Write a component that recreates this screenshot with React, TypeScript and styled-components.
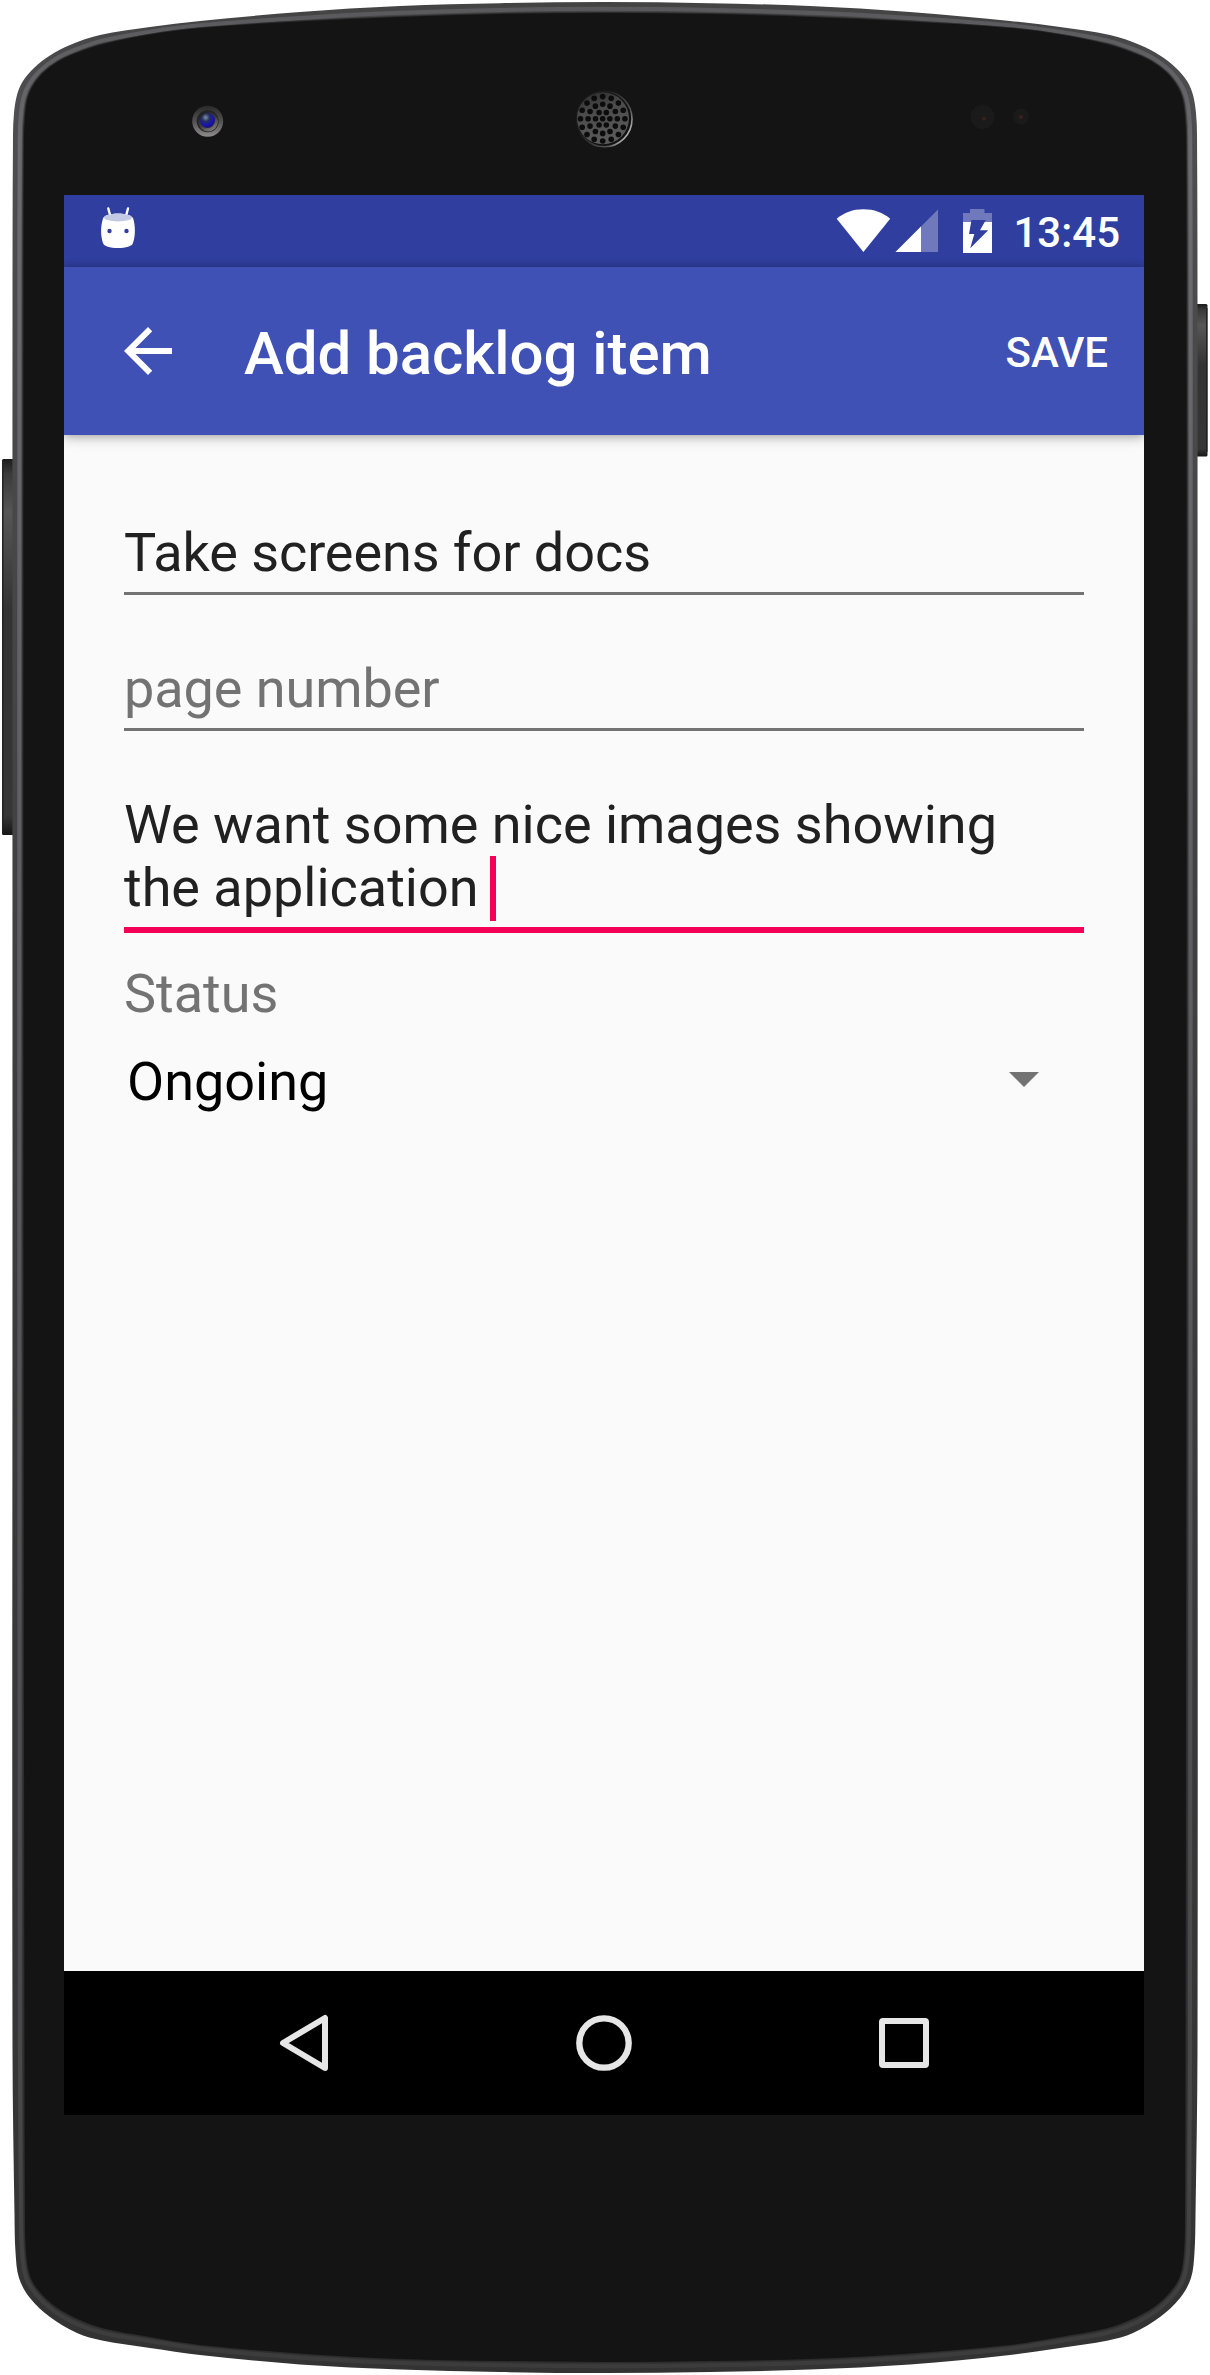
import React from "react";
import styled, { createGlobalStyle } from "styled-components";

const GlobalStyle = createGlobalStyle`
  *, *::before, *::after { box-sizing: border-box; }
  body { margin: 0; background: #fff; font-family: Roboto, "Noto Sans", sans-serif; }
`;

const Device = styled.div`
  position: relative;
  width: 1210px;
  height: 2375px;
  padding: 195px 66px 260px 64px;
`;

const Shell = styled.svg`
  position: absolute;
  inset: 0;
  display: block;
`;

const Screen = styled.main`
  position: relative;
  display: flex;
  flex-direction: column;
  width: 1080px;
  height: 1920px;
  background: #fafafa;
  overflow: hidden;
`;

const StatusBar = styled.div`
  flex: none;
  display: flex;
  align-items: center;
  justify-content: space-between;
  height: 72px;
  padding: 0 24px 0 36px;
  background: #303f9f;
`;

const StatusGroup = styled.div`
  display: flex;
  align-items: center;
`;

const Clock = styled.span`
  margin-left: 20px;
  padding-top: 3px;
  font-size: 42px;
  line-height: 49px;
  font-weight: 500;
  color: #fff;
`;

const Toolbar = styled.header`
  position: relative;
  z-index: 1;
  flex: none;
  display: flex;
  align-items: center;
  height: 168px;
  padding: 0 36px 0 48px;
  background: #3f51b5;
  color: #fff;
  box-shadow: 0 0 8px rgba(0, 0, 0, 0.27), 0 4px 12px rgba(0, 0, 0, 0.17);
`;

const IconButton = styled.button`
  display: flex;
  padding: 0;
  border: 0;
  background: none;
  color: inherit;
`;

const Title = styled.h1`
  flex: 1;
  margin: 5px 0 0 60px;
  font-size: 60px;
  line-height: 71px;
  font-weight: 500;
  letter-spacing: -0.08px;
`;

const SaveButton = styled.button`
  padding: 3px 0 0;
  border: 0;
  background: none;
  color: inherit;
  font: 500 42px/49px Roboto, "Noto Sans", sans-serif;
`;

const Form = styled.section`
  flex: 1;
  display: flex;
  flex-direction: column;
  gap: 62px;
  padding: 86px 60px 0;
`;

const Field = styled.div<{ $focused?: boolean; $hint?: boolean }>`
  padding-bottom: 8px;
  border-bottom: ${(p) => (p.$focused ? "6px solid #f50057" : "3px solid #737373")};
  color: ${(p) => (p.$hint ? "#737373" : "#212121")};
  font-size: 54px;
  line-height: 63px;
  letter-spacing: ${(p) => (p.$focused ? "-0.02px" : "-0.07px")};
  white-space: pre-wrap;
`;

const CaretAnchor = styled.span`
  position: relative;
`;

const Caret = styled.span`
  position: absolute;
  left: -2px;
  top: 0;
  width: 6px;
  height: 65px;
  background: #f50057;
`;

const StatusField = styled.div`
  display: flex;
  flex-direction: column;
  gap: 25px;
  margin-top: -33px;
  font-size: 54px;
  line-height: 63px;
`;

const Label = styled.span`
  color: #737373;
`;

const Spinner = styled.div`
  display: flex;
  align-items: center;
  justify-content: space-between;
  padding: 0 45px 0 3px;
  color: #000;
`;

const DropdownArrow = styled.svg`
  margin-bottom: 4px;
`;

const NavBar = styled.nav`
  flex: none;
  display: flex;
  align-items: center;
  justify-content: space-between;
  height: 144px;
  padding: 0 204px;
  background: #000;
`;

/* Left half of the body outline, from top centre to bottom centre: [outerX, outerY, innerX, innerY] */
const EDGE: number[][] = [
  [605, 2, 605, 13],
  [500, 3.2, 500, 14],
  [400, 6, 400, 17],
  [300, 12, 300, 21.5],
  [200, 21, 200, 28],
  [150, 27, 150, 34.5],
  [100, 35, 104, 44],
  [70, 45, 78, 52.5],
  [50, 55.5, 59, 61],
  [34, 68, 43, 73],
  [23, 81, 33, 86],
  [17, 95, 27.5, 99],
  [14, 113, 25, 117],
  [13, 135, 24, 138],
  [12.5, 300, 23.5, 300],
  [12.5, 1200, 23.5, 1200],
  [12.5, 2050, 24.5, 2050],
  [14.5, 2215, 25, 2215],
  [15.5, 2252, 26, 2252],
  [19, 2278, 30, 2276],
  [30, 2298, 39, 2291],
  [50, 2317, 56, 2307],
  [77, 2333, 80, 2320],
  [102, 2340.5, 104, 2328.5],
  [150, 2348, 150, 2337],
  [200, 2355, 200, 2345],
  [300, 2364.5, 300, 2353.5],
  [400, 2369.5, 400, 2359],
  [500, 2372, 500, 2361],
  [605, 2373, 605, 2362],
];

function outline(t: number): string {
  const left = EDGE.map(([ox, oy, ix, iy]) => [ox + (ix - ox) * t, oy + (iy - oy) * t]);
  const right = left.slice(1, -1).reverse().map(([x, y]) => [1210 - x, y]);
  const pts = [...left, ...right];
  const n = pts.length;
  let d = `M${pts[0][0]} ${pts[0][1]}`;
  for (let i = 0; i < n; i++) {
    const a = pts[(i - 1 + n) % n];
    const b = pts[i];
    const c = pts[(i + 1) % n];
    const e = pts[(i + 2) % n];
    const len = Math.hypot(c[0] - b[0], c[1] - b[1]);
    const h1 = len / 3 / (Math.hypot(c[0] - a[0], c[1] - a[1]) || 1);
    const h2 = len / 3 / (Math.hypot(e[0] - b[0], e[1] - b[1]) || 1);
    d += `C${b[0] + (c[0] - a[0]) * h1} ${b[1] + (c[1] - a[1]) * h1} ${c[0] - (e[0] - b[0]) * h2} ${
      c[1] - (e[1] - b[1]) * h2
    } ${c[0]} ${c[1]}`;
  }
  return d + "Z";
}

/* Speaker perforations: a centre hole and rings of 6, 12 and 16 */
const HOLES: number[][] = [[0, 0]];
[[7.2, 6, 60], [14.6, 12, 0], [22.2, 16, 0]].forEach(([r, count, offset]) => {
  for (let i = 0; i < count; i++) {
    const angle = ((i * 360) / count + offset) * (Math.PI / 180);
    HOLES.push([r * Math.cos(angle), r * Math.sin(angle)]);
  }
});

function PhoneShell() {
  return (
    <Shell width="1210" height="2375" viewBox="0 0 1210 2375" aria-hidden="true">
      <defs>
        <linearGradient id="rim" x1="0" y1="0" x2="0" y2="1">
          <stop offset="0" stopColor="#434344" />
          <stop offset="0.04" stopColor="#4e4e50" />
          <stop offset="0.5" stopColor="#3c3c3e" />
          <stop offset="1" stopColor="#333334" />
        </linearGradient>
        <linearGradient id="shine" x1="0" y1="0" x2="0" y2="1">
          <stop offset="0" stopColor="#5a5a5c" />
          <stop offset="0.06" stopColor="#6c6c70" />
          <stop offset="0.5" stopColor="#5a5a5e" />
          <stop offset="0.9" stopColor="#474748" />
          <stop offset="1" stopColor="#3c3c3d" />
        </linearGradient>
        <linearGradient id="key" x1="0" y1="0" x2="0" y2="1">
          <stop offset="0" stopColor="#1c1c1c" />
          <stop offset="0.04" stopColor="#3a3a3a" />
          <stop offset="0.14" stopColor="#565656" />
          <stop offset="0.4" stopColor="#333" />
          <stop offset="0.95" stopColor="#363636" />
          <stop offset="1" stopColor="#161616" />
        </linearGradient>
        <linearGradient id="lensRing" x1="0" y1="0" x2="0" y2="1">
          <stop offset="0" stopColor="#2a2a2a" />
          <stop offset="0.5" stopColor="#515151" />
          <stop offset="1" stopColor="#8c8c8c" />
        </linearGradient>
        <linearGradient id="lensInner" x1="0.2" y1="0" x2="0.8" y2="1">
          <stop offset="0" stopColor="#1d1d1d" />
          <stop offset="0.5" stopColor="#3c3a3a" />
          <stop offset="1" stopColor="#8a8580" />
        </linearGradient>
        <radialGradient id="lens" cx="0.38" cy="0.3" r="0.75">
          <stop offset="0" stopColor="#7d93a4" />
          <stop offset="0.35" stopColor="#26305c" />
          <stop offset="0.7" stopColor="#1812b8" />
          <stop offset="1" stopColor="#1a1450" />
        </radialGradient>
        <linearGradient id="grilleRim" x1="0" y1="0.1" x2="1" y2="0.75">
          <stop offset="0.35" stopColor="#1c1c1c" />
          <stop offset="0.8" stopColor="#555" />
          <stop offset="1" stopColor="#c8c8c8" />
        </linearGradient>
        <linearGradient id="grille" x1="0" y1="0" x2="0.3" y2="1">
          <stop offset="0" stopColor="#282828" />
          <stop offset="0.4" stopColor="#4a4a4a" />
          <stop offset="1" stopColor="#5a5a5a" />
        </linearGradient>
      </defs>

      <rect x="2" y="459" width="14" height="376" rx="1.5" fill="url(#key)" />
      <rect x="1194" y="304" width="13.5" height="152.500" rx="1.5" fill="url(#key)" />
      <rect x="2" y="465" width="1.500" height="364" fill="#222" />
      <rect x="1206" y="308" width="1.500" height="144" fill="#222" />

      <path d={outline(0)} fill="url(#rim)" />
      <path d={outline(0.62)} fill="none" stroke="url(#shine)" strokeWidth="4" />
      <path d={outline(0.9)} fill="#2c2c2d" />
      <path d={outline(1)} fill="#141414" />

      <circle cx="207.700" cy="121.300" r="15.500" fill="url(#lensRing)" />
      <circle cx="207.700" cy="121.300" r="11" fill="#232323" />
      <circle cx="208" cy="121.500" r="10" fill="url(#lensInner)" />
      <circle cx="207.500" cy="120.500" r="7.400" fill="url(#lens)" />

      <circle cx="604.300" cy="119" r="27.700" fill="#111" stroke="url(#grilleRim)" strokeWidth="1.600" />
      <circle cx="603" cy="118.300" r="26" fill="url(#grille)" />
      {HOLES.map(([x, y], i) => (
        <circle key={i} cx={602.7 + x} cy={118.8 + y} r="2.800" fill="#0c0c0c" />
      ))}

      <circle cx="982.500" cy="117" r="12" fill="#1b1a1a" />
      <circle cx="984" cy="118.500" r="2" fill="#38221b" />
      <circle cx="1021" cy="116.500" r="8" fill="#1b1a1a" />
      <circle cx="1021" cy="117" r="2" fill="#38221b" />
    </Shell>
  );
}

function RobotIcon() {
  return (
    <svg width="36" height="48" viewBox="100 207 36 48">
      <path d="M108.300 208.500 L110.300 216 M128 208.500 L126 216" stroke="#fff" strokeWidth="2.400" strokeLinecap="round" />
      <path
        d="M103 218.500C103.500 216 110 213.500 118 213.500S132.500 216 133.200 218.500C135.500 226 135.500 236 133 243C132 246.500 126 248 118 248S104 246.500 103 243C100.500 236 100.500 226 103 218.500Z"
        fill="#fff"
      />
      <ellipse cx="118" cy="217.600" rx="14" ry="3.900" fill="#c5cae4" />
      <circle cx="109.500" cy="231" r="2.200" fill="#303f9f" />
      <circle cx="126.500" cy="231" r="2.200" fill="#303f9f" />
    </svg>
  );
}

/* Wi-Fi, mobile signal and charging battery */
function SystemIcons() {
  return (
    <svg width="158" height="48" viewBox="835 207 158 48">
      <path d="M836.700 218.700C844 212.500 853 209.200 863.400 209.200S883 212.500 890.200 218.700L863.400 252Z" fill="#fff" />
      <path d="M938 209.500V252H895.500Z" fill="#6f79bb" />
      <path d="M921 226.500V252H895.500Z" fill="#fff" />
      <path d="M970 209H984.500V213H992V222H963V213H970Z" fill="#6f79bb" />
      <path d="M963 222H992V253H963Z" fill="#fff" />
      <path d="M971.500 220H985.800L980 230.300H988.200L970.200 248.300L974.300 234H969Z" fill="#303f9f" />
    </svg>
  );
}

export default function App() {
  return (
    <>
      <GlobalStyle />
      <Device>
        <PhoneShell />
        <Screen>
          <StatusBar>
            <RobotIcon />
            <StatusGroup>
              <SystemIcons />
              <Clock>13:45</Clock>
            </StatusGroup>
          </StatusBar>
          <Toolbar>
            <IconButton aria-label="Back">
              <svg width="72" height="72" viewBox="0 0 24 24" fill="currentColor">
                <path d="M20 11H7.830l5.590-5.590L12 4l-8 8 8 8 1.410-1.410L7.830 13H20v-2z" />
              </svg>
            </IconButton>
            <Title>Add backlog item</Title>
            <SaveButton>SAVE</SaveButton>
          </Toolbar>
          <Form>
            <Field>Take screens for docs</Field>
            <Field $hint>page number</Field>
            <Field $focused>
              We want some nice images showing the application{" "}
              <CaretAnchor>
                <Caret />
              </CaretAnchor>
            </Field>
            <StatusField>
              <Label>Status</Label>
              <Spinner>
                Ongoing
                <DropdownArrow width="30" height="15" viewBox="0 0 30 15">
                  <path d="M0 0H30L15 15Z" fill="#737373" />
                </DropdownArrow>
              </Spinner>
            </StatusField>
          </Form>
          <NavBar>
            <svg width="72" height="72" viewBox="-36 -36 72 72">
              <path d="M-21 0L21 -25V25Z" fill="none" stroke="#e6e6e6" strokeWidth="6" strokeLinejoin="round" />
            </svg>
            <svg width="72" height="72" viewBox="-36 -36 72 72">
              <circle r="24.700" fill="none" stroke="#e6e6e6" strokeWidth="6.300" />
            </svg>
            <svg width="72" height="72" viewBox="-36 -36 72 72">
              <rect x="-22" y="-22" width="44" height="44" rx="1" fill="none" stroke="#e6e6e6" strokeWidth="6" strokeLinejoin="round" />
            </svg>
          </NavBar>
        </Screen>
      </Device>
    </>
  );
}
